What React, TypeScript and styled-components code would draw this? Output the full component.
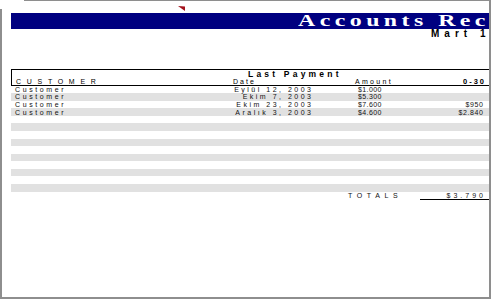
import styled, { createGlobalStyle } from 'styled-components';

type Row = { customer: string; date: string; amount: string; current: string };

const rows: Row[] = [
  { customer: 'Customer', date: 'Eylül 12, 2003', amount: '$1.000', current: '' },
  { customer: 'Customer', date: 'Ekim 7, 2003', amount: '$5.300', current: '' },
  { customer: 'Customer', date: 'Ekim 23, 2003', amount: '$7.600', current: '$950' },
  { customer: 'Customer', date: 'Aralık 3, 2003', amount: '$4.600', current: '$2.840' },
];

const EMPTY_ROWS = 10;

const AccountsReceivable: React.FunctionComponent = () => {
  const filled: Row[] = [
    ...rows,
    ...Array.from({ length: EMPTY_ROWS }, () => ({ customer: '', date: '', amount: '', current: '' })),
  ];
  return (
    <>
      <GlobalStyle />
      <Window>
        <Viewport>
          <Sheet>
            <MarkerRow>
              <CommentMark width='7' height='5' viewBox='0 0 7 5'>
                <polygon points='0,0 7,0.6 7,5' fill='#a3121c' />
              </CommentMark>
            </MarkerRow>
            <TitleBar>
              <Title>Accounts Receivable Aging</Title>
            </TitleBar>
            <DateLine>Mart 16, 2004</DateLine>

            <HeaderBox>
              <Cell $col='2 / 4' $pad='0 0 0 36px' $bold $size={8.5} $spacing={3.2}>
                Last Payment
              </Cell>
              <Cell $col='5 / 7' />
              <Cell $col='1' $pad='0 0 0 4px' $spacing={5.7}>
                CUSTOMER
              </Cell>
              <Cell $col='2' $pad='0 0 0 21px' $spacing={2}>
                Date
              </Cell>
              <Cell $col='3' $pad='0 0 0 43px' $spacing={2.3}>
                Amount
              </Cell>
              <Cell $col='4' $align='right' $pad='0 0 0 0' $bold $size={7.5} $spacing={2}>
                0-30
              </Cell>
            </HeaderBox>

            {filled.map((r, idx) => (
              <DataRow key={idx} $shaded={idx % 2 === 1}>
                <Cell $pad='0 0 0 4px' $spacing={2.6}>
                  {r.customer}
                </Cell>
                <Cell $align='right' $pad='0 0 0 0' $spacing={2.5}>
                  {r.date}
                </Cell>
                <Cell $pad='0 0 0 47px' $spacing={0.4}>
                  {r.amount}
                </Cell>
                <Cell $align='right' $pad='0 0 0 0' $spacing={0.6}>
                  {r.current}
                </Cell>
                <Cell />
                <Cell />
              </DataRow>
            ))}

            <TotalsRow>
              <Cell />
              <Cell />
              <Cell $pad='0 0 0 37px' $spacing={4.6}>
                TOTALS
              </Cell>
              <TotalCell $align='right' $pad='0 0 0 0' $spacing={3}>
                $3.790
              </TotalCell>
              <TotalCell />
              <Cell />
            </TotalsRow>
          </Sheet>
        </Viewport>
      </Window>
    </>
  );
};

const GlobalStyle = createGlobalStyle`
  body {
    margin: 0;
    background: #fff;
    font-family: 'Liberation Sans', Arial, sans-serif;
    color: #111;
  }
`;

const Window = styled.div`
  position: relative;
  width: 491px;
  height: 299px;
  box-sizing: border-box;
  border-top: 1px solid #8e8e8e;
  border-left: 2px solid #8e8e8e;
  border-right: 2px solid #8e8e8e;
  border-bottom: 2px solid #8e8e8e;
  &::before {
    content: '';
    position: absolute;
    top: -1px;
    left: -2px;
    width: 24px;
    height: 9px;
    background: #fff;
  }
`;

const Viewport = styled.div`
  width: 100%;
  height: 100%;
  overflow: hidden;
`;

const Sheet = styled.div`
  margin-left: 9px;
  width: 632px;
`;

const MarkerRow = styled.div`
  height: 12px;
  display: flex;
  align-items: flex-start;
`;

const CommentMark = styled.svg`
  display: block;
  margin: 5px 0 0 167px;
`;

const TitleBar = styled.div`
  height: 16px;
  background: #000080;
  padding-left: 287px;
  display: flex;
  align-items: center;
  white-space: nowrap;
  overflow: hidden;
`;

const Title = styled.span`
  display: inline-block;
  font-family: 'Liberation Serif', 'Times New Roman', serif;
  font-weight: bold;
  font-size: 17px;
  line-height: 16px;
  letter-spacing: 3.2px;
  color: #fff;
  transform: scaleX(1.4);
  transform-origin: left center;
`;

const DateLine = styled.div`
  height: 9px;
  padding-left: 420px;
  font-weight: bold;
  font-size: 10px;
  line-height: 9px;
  letter-spacing: 5px;
  white-space: nowrap;
  color: #000;
`;

const columns = '200px 100px 109px 63px 80px 80px';

const HeaderBox = styled.div`
  margin-top: 31px;
  display: grid;
  grid-template-columns: ${columns};
  grid-template-rows: 7.75px 6.75px;
  border: 1px solid #000;
  box-sizing: content-box;
  color: #000;
`;

const DataRow = styled.div<{ $shaded: boolean }>`
  display: grid;
  grid-template-columns: ${columns};
  height: 7.58px;
  background: ${(p) => (p.$shaded ? '#e1e1e1' : '#fff')};
`;

const TotalsRow = styled.div`
  display: grid;
  grid-template-columns: ${columns};
  height: 8.4px;
`;

const Cell = styled.div<{
  $col?: string;
  $align?: 'left' | 'right';
  $pad?: string;
  $bold?: boolean;
  $size?: number;
  $spacing?: number;
}>`
  grid-column: ${(p) => p.$col ?? 'auto'};
  text-align: ${(p) => p.$align ?? 'left'};
  padding: ${(p) => p.$pad ?? '0'};
  margin-right: ${(p) => (p.$align === 'right' ? `-${p.$spacing ?? 0}px` : '0')};
  font-weight: ${(p) => (p.$bold ? 'bold' : 'normal')};
  font-size: ${(p) => p.$size ?? 7}px;
  letter-spacing: ${(p) => p.$spacing ?? 0}px;
  line-height: inherit;
  white-space: nowrap;
  overflow: visible;
  display: flex;
  align-items: center;
  justify-content: ${(p) => (p.$align === 'right' ? 'flex-end' : 'flex-start')};
`;

const TotalCell = styled(Cell)`
  border-bottom: 1px solid #000;
  box-sizing: border-box;
`;

export default AccountsReceivable;
